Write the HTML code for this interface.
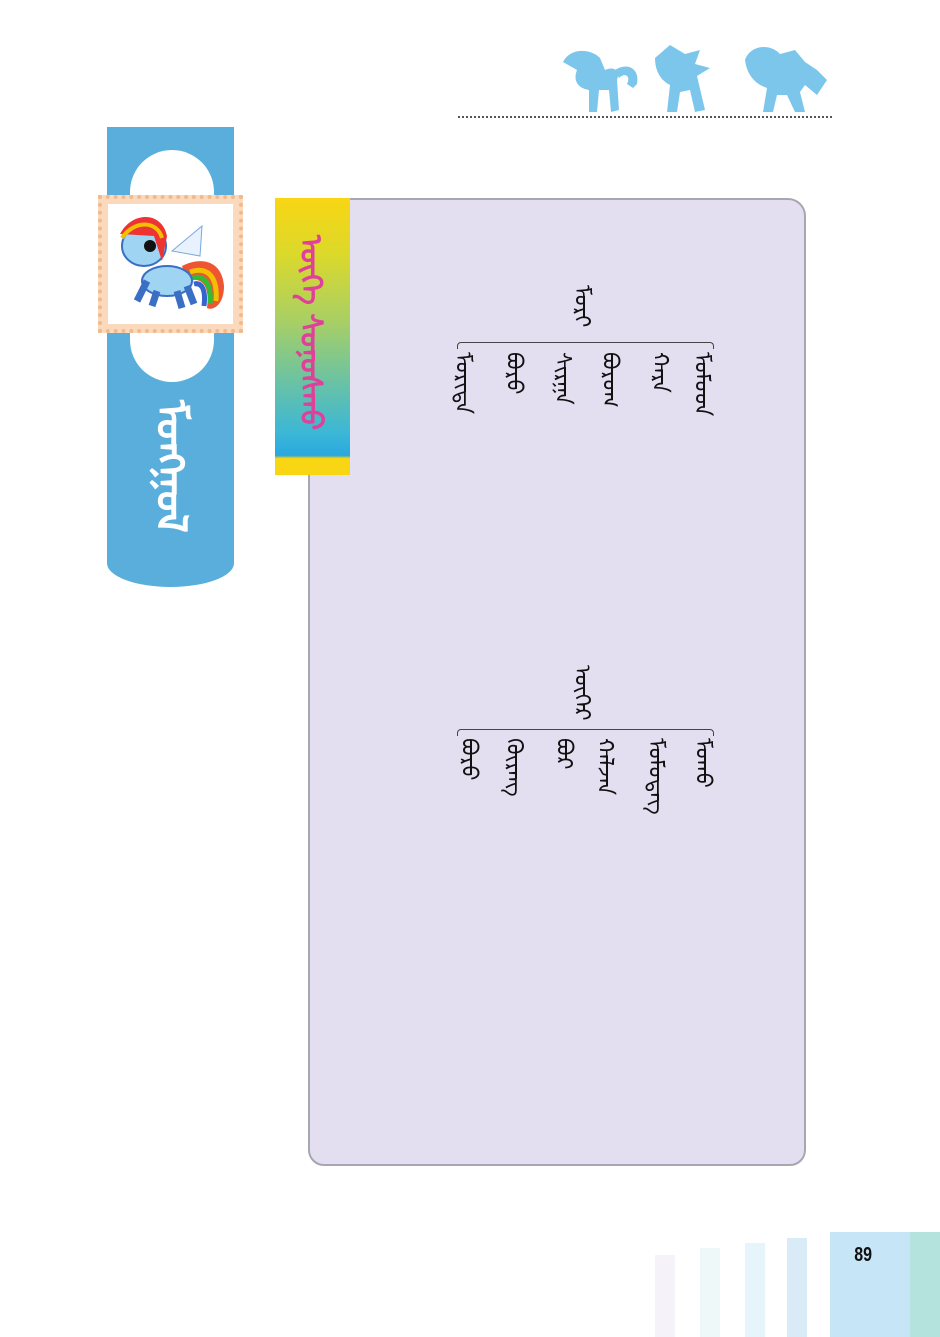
<!DOCTYPE html>
<html><head><meta charset="utf-8"><style>
body{margin:0;width:940px;height:1337px;background:#fff;position:relative;overflow:hidden;font-family:"Liberation Sans",sans-serif}
.a{position:absolute}
.m{position:absolute;writing-mode:vertical-lr;font-size:22px;color:#111;line-height:1;white-space:nowrap}
</style></head><body>
<svg class="a" style="left:555px;top:40px" width="280" height="80" viewBox="0 0 280 80" fill="#7cc6ec">
<path d="M8 22 C15 8 35 8 45 18 L50 30 C58 26 66 30 62 40 L64 70 L56 72 L54 50 L44 50 L42 72 L34 72 L34 50 C22 48 18 40 22 30 Z"/>
<path d="M60 30 C72 22 85 28 82 44 L78 48 L72 44 C76 36 70 32 64 38 Z"/>
<path d="M100 18 L115 5 L130 14 L145 10 L140 24 L155 28 L142 36 L150 70 L140 72 L135 50 L125 52 L122 72 L112 72 L115 45 C105 40 100 30 100 18 Z"/>
<path d="M190 20 C195 5 215 3 225 14 L240 10 L250 22 L262 30 L272 40 L262 55 L250 45 L245 52 L250 72 L240 72 L232 55 L222 55 L218 72 L208 72 L212 48 C200 44 192 35 190 20 Z"/>
</svg>
<div class="a" style="left:458px;top:116px;width:374px;border-top:2px dotted #555"></div>
<div class="a" style="left:107px;top:127px;width:127px;height:460px;background:#5aaedb;border-radius:0 0 64px 64px/0 0 24px 24px"></div>
<div class="a" style="left:130px;top:150px;width:84px;height:232px;background:#fff;border-radius:42px"></div>
<div class="a" style="left:98px;top:195px;width:145px;height:138px;background:#fbd9bd;border:4px dotted #f2b98c;box-sizing:border-box"></div>
<div class="a" style="left:108px;top:204px;width:125px;height:120px;background:#fff"></div>
<svg class="a" style="left:112px;top:206px" width="120" height="115" viewBox="0 0 120 115">
<path d="M60 45 L90 20 L88 50 Z" fill="#e8f2ff" stroke="#7aa7dd"/>
<path d="M70 60 C90 50 110 55 112 80 C112 100 100 105 95 102 C98 80 90 70 75 75 Z" fill="#e53" />
<path d="M78 66 C95 60 106 70 104 95" stroke="#f2c000" stroke-width="5" fill="none"/>
<path d="M80 72 C92 68 100 78 98 98" stroke="#3b3" stroke-width="5" fill="none"/>
<path d="M82 78 C90 76 94 84 92 100" stroke="#36c" stroke-width="5" fill="none"/>
<ellipse cx="55" cy="75" rx="25" ry="15" fill="#9fd4f2" stroke="#3a6fc4" stroke-width="2"/>
<path d="M35 75 L25 95 M45 85 L40 100 M65 85 L70 102 M75 80 L82 98" stroke="#3a6fc4" stroke-width="7"/>
<ellipse cx="32" cy="40" rx="22" ry="20" fill="#9fd4f2" stroke="#3a6fc4" stroke-width="2"/>
<path d="M8 28 C20 5 50 5 55 30 L50 55 L42 30 Z" fill="#e33"/>
<path d="M10 32 C22 14 45 14 50 32" stroke="#f2c000" stroke-width="4" fill="none"/>
<circle cx="38" cy="40" r="6" fill="#111"/>
</svg>
<div class="m" style="left:150px;top:400px;color:#fff;font-size:42px;font-weight:bold">ᠮᠣᠩᠭᠣᠯ</div>
<div class="a" style="left:308px;top:198px;width:498px;height:968px;background:#e3dff0;border:2px solid #a8a6b0;box-sizing:border-box;border-radius:0 18px 16px 16px"></div>
<div class="a" style="left:275px;top:198px;width:75px;height:277px;background:linear-gradient(#f8d614 0%,#dcd92a 20%,#a7cf66 45%,#6ec3a0 65%,#3bb7d7 85%,#2aa8df 93%,#f8d614 94%)"></div>
<div class="m" style="left:295px;top:235px;color:#e0409a;font-size:30px;font-weight:bold">ᠦᠭᠡ ᠰᠣᠨᠣᠰᠬᠤ</div>
<div class="m" style="left:571px;top:285px">ᠮᠣᠷᠢ</div>
<div class="a" style="left:457px;top:342px;width:255px;height:6px;border:1px solid #444;border-bottom:none;border-radius:4px 4px 0 0"></div>
<div class="m" style="left:452px;top:352px">ᠮᠣᠷᠢᠳᠠ</div>
<div class="m" style="left:503px;top:352px">ᠪᠣᠷᠣ</div>
<div class="m" style="left:552px;top:352px">ᠰᠢᠷᠭᠠ</div>
<div class="m" style="left:599px;top:352px">ᠪᠣᠷᠣᠭ</div>
<div class="m" style="left:649px;top:352px">ᠬᠠᠷᠠ</div>
<div class="m" style="left:691px;top:352px">ᠮᠣᠮᠣᠳ</div>
<div class="m" style="left:571px;top:665px">ᠦᠬᠡᠷ</div>
<div class="a" style="left:457px;top:729px;width:255px;height:6px;border:1px solid #444;border-bottom:none;border-radius:4px 4px 0 0"></div>
<div class="m" style="left:458px;top:738px">ᠪᠣᠷᠣ</div>
<div class="m" style="left:503px;top:738px">ᠬᠦᠷᠡᠩ</div>
<div class="m" style="left:553px;top:738px">ᠪᠣᠷ</div>
<div class="m" style="left:594px;top:738px">ᠬᠠᠯᠵᠠᠨ</div>
<div class="m" style="left:645px;top:738px">ᠮᠣᠮᠣᠳᠡᠭ</div>
<div class="m" style="left:692px;top:738px">ᠮᠣᠬᠣ</div>
<div class="a" style="left:655px;top:1255px;width:20px;height:82px;background:#f5f2fa"></div>
<div class="a" style="left:700px;top:1248px;width:20px;height:89px;background:#eef8f8"></div>
<div class="a" style="left:745px;top:1243px;width:20px;height:94px;background:#e6f5fb"></div>
<div class="a" style="left:787px;top:1238px;width:20px;height:99px;background:#d8ebf6"></div>
<div class="a" style="left:830px;top:1232px;width:80px;height:105px;background:#c6e6f7"></div>
<div class="a" style="left:910px;top:1232px;width:30px;height:105px;background:#b4e2dc"></div>
<div class="a" style="left:852px;top:1244px;font-size:20px;font-weight:bold;color:#111;transform:scaleX(0.8)">89</div>
</body></html>
